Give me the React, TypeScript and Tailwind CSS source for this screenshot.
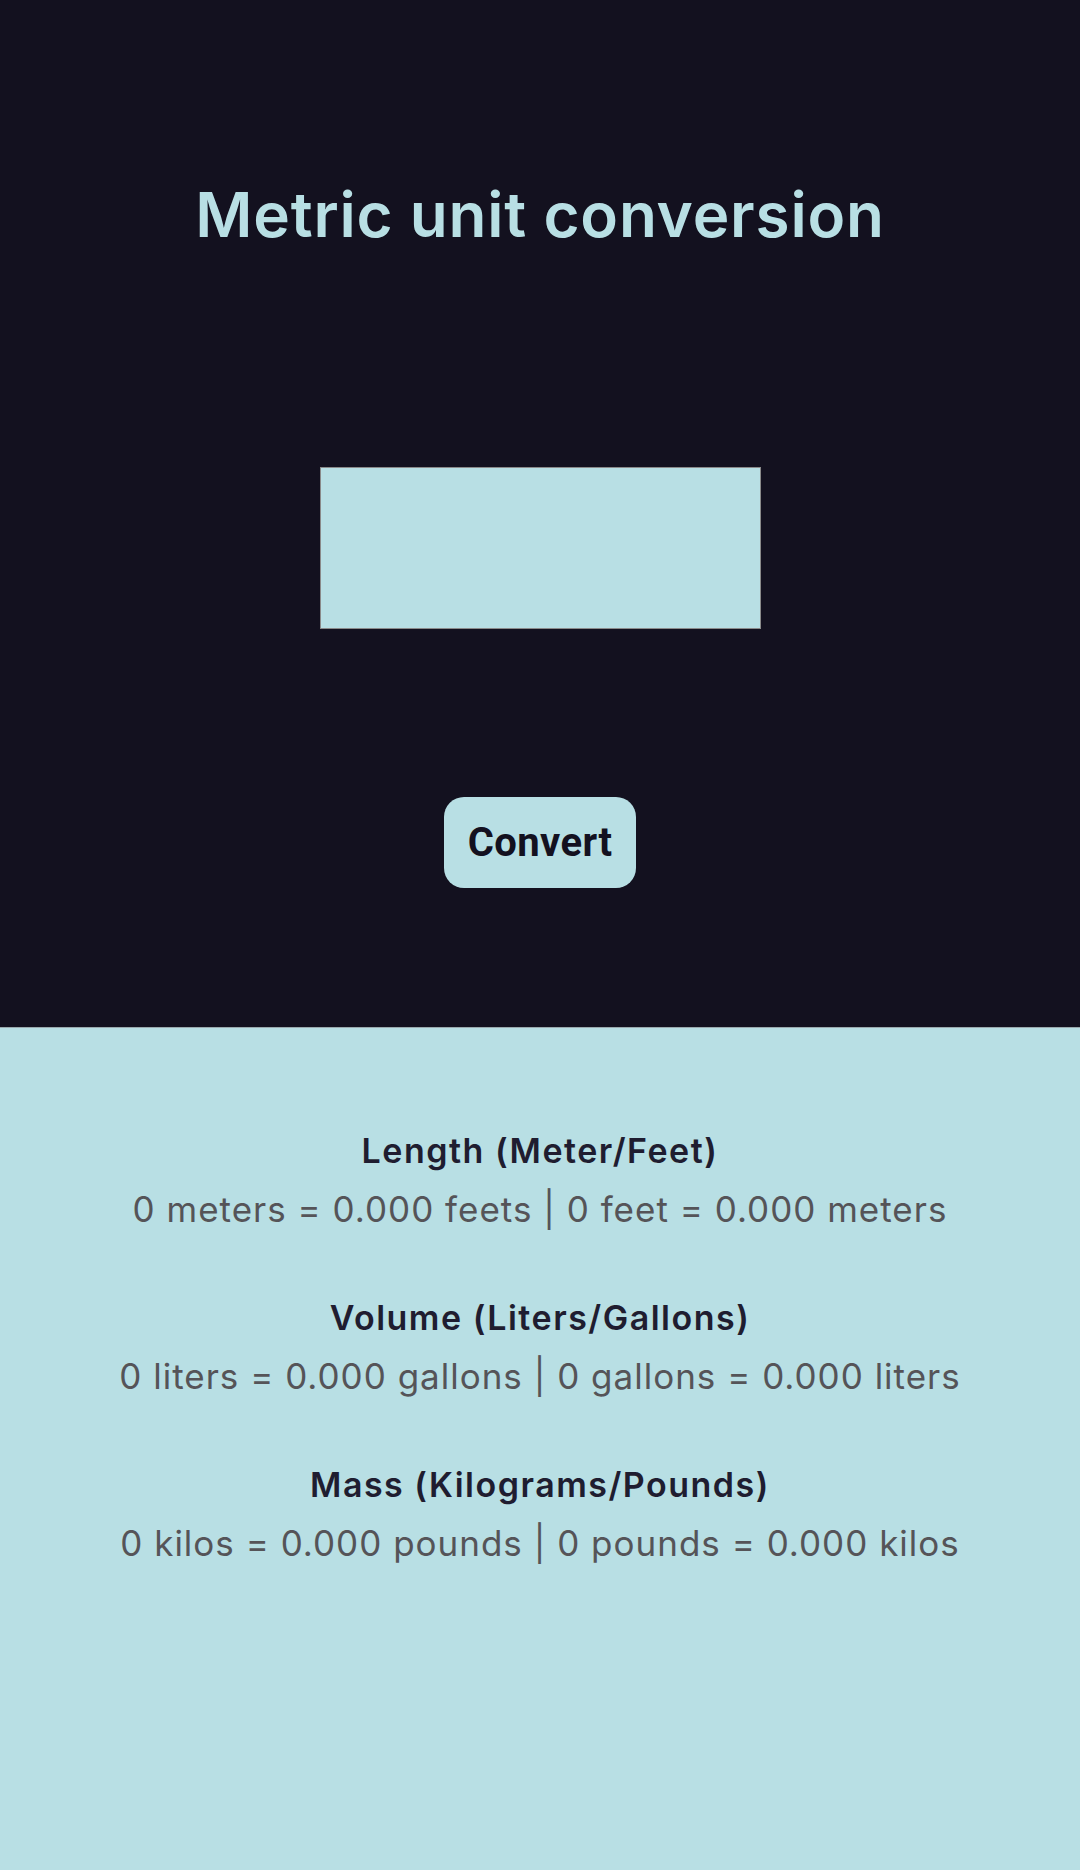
import { useState } from 'react'

const units = [
  { title: 'Length (Meter/Feet)', a: 'meters', b: 'feets', c: 'feet', d: 'meters' },
  { title: 'Volume (Liters/Gallons)', a: 'liters', b: 'gallons', c: 'gallons', d: 'liters' },
  { title: 'Mass (Kilograms/Pounds)', a: 'kilos', b: 'pounds', c: 'pounds', d: 'kilos' },
]

export default function App() {
  const [value, setValue] = useState('')

  return (
    <div className="min-h-[1870px] flex flex-col font-['Inter','Noto_Sans',sans-serif]">
      <section className="h-[1028px] bg-[#13111f] flex flex-col items-center pt-[184px] border-b border-[#9aa9ad]">
        <h1 className="text-[62px] leading-[62px] font-semibold text-[#b8dfe4] tracking-[0.8px]">
          Metric unit conversion
        </h1>
        <input
          type="text"
          value={value}
          onChange={(e) => setValue(e.target.value)}
          className="mt-[221px] w-[441px] h-[162px] bg-[#b8dfe4] border border-[#8a8a8a] outline-none text-center text-3xl text-[#13111f]"
        />
        <button className="mt-[168px] w-[192px] h-[91px] rounded-[20px] bg-[#b8dfe4] text-[#13111f] font-['Roboto',sans-serif] font-bold text-[40px] tracking-[0.4px]">
          Convert
        </button>
      </section>

      <section className="flex-1 bg-[#b8dfe4] flex flex-col items-center pt-[103px] gap-[69px]">
        {units.map((u) => (
          <div key={u.title} className="flex flex-col items-center gap-[18px]">
            <h2 className="text-[34px] leading-[40px] font-semibold text-[#1f1d30] tracking-[1.5px]">{u.title}</h2>
            <p className="text-[35px] leading-[40px] text-[#555458] tracking-[1px]">
              0 {u.a} = 0.000 {u.b} | 0 {u.c} = 0.000 {u.d}
            </p>
          </div>
        ))}
      </section>
    </div>
  )
}
